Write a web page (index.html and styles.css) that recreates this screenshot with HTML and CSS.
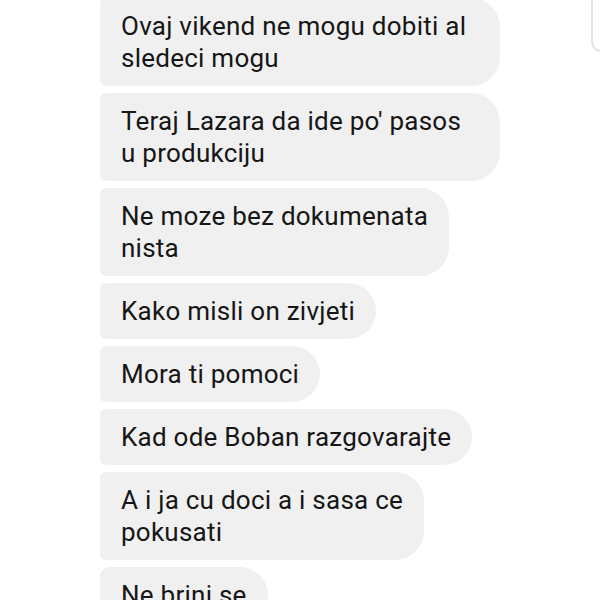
FILE: index.html
```html
<!DOCTYPE html>
<html lang="en">

<head>
    <meta charset="UTF-8">
    <meta name="viewport" content="width=device-width, initial-scale=1.0">
    <title>Chat</title>
    <link rel="stylesheet" href="styles.css">
</head>

<body>

    <div class="chat">
        <!-- Received messages, one bubble each -->
        <div class="thread">
            <div class="bubble bubble-wide">Ovaj vikend ne mogu dobiti al<br>sledeci mogu</div>
            <div class="bubble bubble-wide">Teraj Lazara da ide po' pasos<br>u produkciju</div>
            <div class="bubble">Ne moze bez dokumenata<br>nista</div>
            <div class="bubble">Kako misli on zivjeti</div>
            <div class="bubble">Mora ti pomoci</div>
            <div class="bubble">Kad ode Boban razgovarajte</div>
            <div class="bubble">A i ja cu doci a i sasa ce<br>pokusati</div>
            <div class="bubble bubble-last">Ne brini se</div>
        </div>

        <!-- scrollbar edge on the right -->
        <div class="scroll-edge"></div>
    </div>

</body>

</html>
```

FILE: styles.css
```css
body {
    font-family: Roboto, 'Noto Sans', sans-serif;
    background-color: #fff;
    color: #161616;
    margin: 0;
    padding: 0;
    overflow: hidden;
}

.chat {
    position: relative;
    width: 600px;
    height: 600px;
    overflow: hidden;
}

.thread {
    display: flex;
    flex-direction: column;
    align-items: flex-start;
    gap: 7px;
    margin-top: -2px;
    padding-left: 100px;
}

.bubble {
    background-color: #f0f0f0;
    font-size: 26px;
    letter-spacing: 0.25px;
    line-height: 32px;
    padding: 12px 21px 12px 21px;
    border-radius: 6px 29px 29px 6px;
}

.bubble-wide {
    width: 358px;
}

.bubble-last {
    border-radius: 10px 29px 29px 6px;
}

.scroll-edge {
    position: absolute;
    top: -10px;
    left: 591px;
    width: 30px;
    height: 60px;
    border-left: 2px solid #e2e2e2;
    border-bottom: 2px solid #e2e2e2;
    border-bottom-left-radius: 10px;
}
```
